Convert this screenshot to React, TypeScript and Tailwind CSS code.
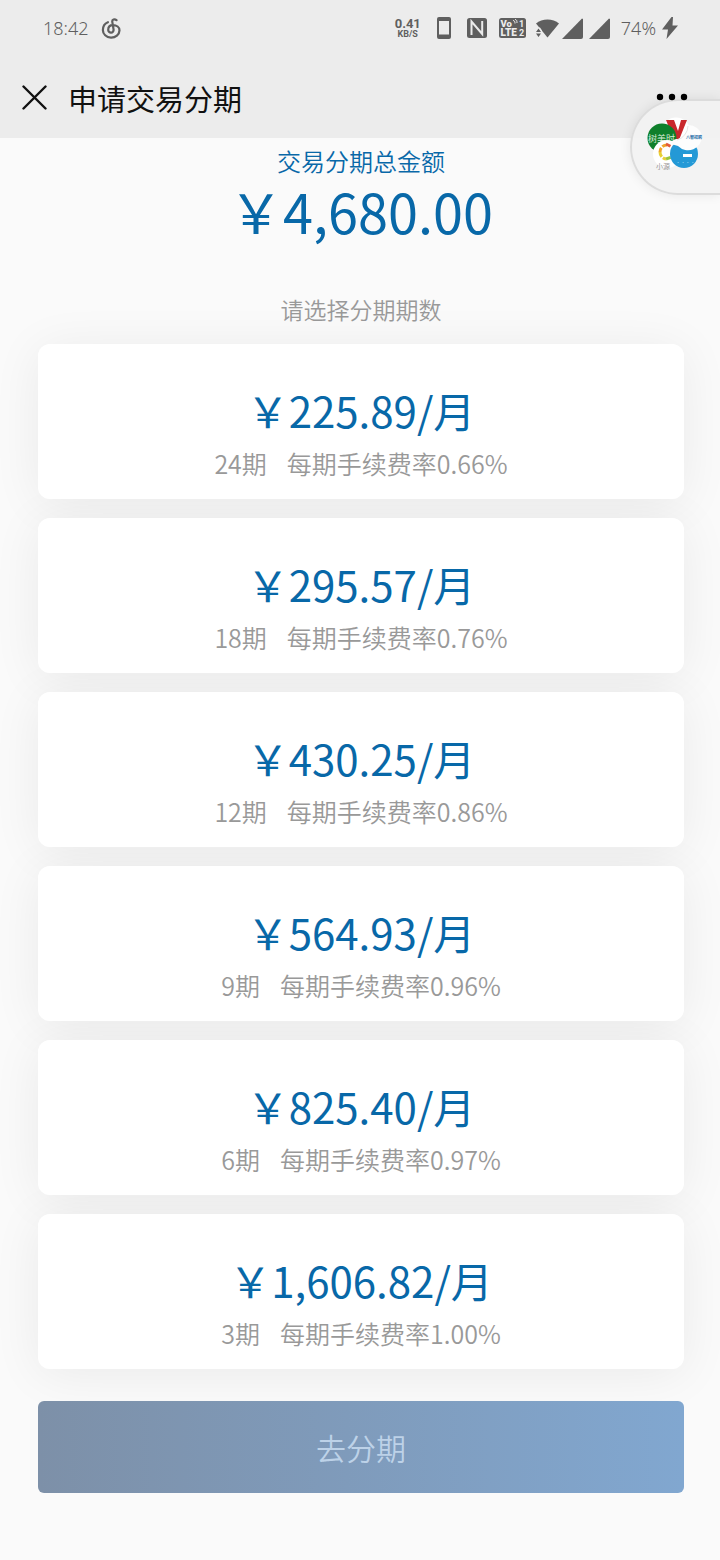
import { useState } from 'react';

const plans = [
  { periods: 24, amount: '225.89', rate: '0.66%' },
  { periods: 18, amount: '295.57', rate: '0.76%' },
  { periods: 12, amount: '430.25', rate: '0.86%' },
  { periods: 9, amount: '564.93', rate: '0.96%' },
  { periods: 6, amount: '825.40', rate: '0.97%' },
  { periods: 3, amount: '1,606.82', rate: '1.00%' },
];

function StatusBar() {
  return (
    <div className="flex h-14 items-center justify-between pl-[43px] pr-[42px] font-['Noto_Sans',sans-serif] text-[#5f5f5f]">
      <div className="flex items-center gap-3">
        <span className="text-lg font-light">18:42</span>
        <svg className="h-[21px] w-5" viewBox="0 0 20 21" fill="none" stroke="currentColor" strokeWidth="2.200" strokeLinecap="round">
          <path d="M15.500 2.200c-2-1.600-4.600-.700-4.200 1.700l1.300 7.800a2.700 2.700 0 1 1-5.400.300c0-2.900 1.700-4.800 4.600-4.800 4 0 6.700 2 6.700 5.200a8.300 7.400 0 0 1-16.600-.400c0-3.600 1.800-6.500 5-7.800" />
        </svg>
      </div>
      <div className="flex items-center">
        <div className="mr-4 flex flex-col items-center font-['Roboto',sans-serif] font-bold">
          <span className="text-[13px] leading-[13px]">0.41</span>
          <span className="text-[9px] leading-[9px]">KB/S</span>
        </div>
        <svg className="mr-4 h-[22px] w-[14px]" viewBox="0 0 14 22" fill="currentColor">
          <path fillRule="evenodd" d="M2 0h10a2 2 0 0 1 2 2v18a2 2 0 0 1-2 2H2a2 2 0 0 1-2-2V2a2 2 0 0 1 2-2zm0 4v13.500h10V4z" />
        </svg>
        <svg className="mr-3 size-5" viewBox="0 0 20 20" fill="none">
          <rect width="20" height="20" rx="2.500" fill="currentColor" />
          <path d="M4.500 17V3.500L15.200 16V3" stroke="#ececec" strokeWidth="2" />
        </svg>
        <svg className="mr-[10px] h-5 w-[27px]" viewBox="0 0 27 20">
          <rect width="27" height="20" rx="2.500" fill="currentColor" />
          <g fill="#ececec" fontFamily="Roboto, sans-serif" fontWeight="900">
            <text x="1.500" y="9" fontSize="9.500">Vo</text>
            <text x="1.500" y="18" fontSize="10">LTE</text>
            <text x="20" y="9" fontSize="9" fontWeight="700">1</text>
            <text x="20" y="18" fontSize="9" fontWeight="700">2</text>
          </g>
          <path d="M14 2.500c1.500 0 2 1 2 3M16 1.500c1.500 0 2 1 2 3.500" fill="none" stroke="#ececec" />
        </svg>
        <svg className="mr-[3px] h-[21px] w-[23px]" viewBox="0 0 23 21" fill="currentColor">
          <path d="M0 5.500C6 0 17 0 23 5.500L11.500 19.500z" />
          <path d="M0 9.500h4l2 3v6H0z" fill="#ececec" />
          <path d="m2.500 10.500 2.500 3.500H0zM0 15.500h5L2.500 19z" />
        </svg>
        <svg className="mr-[6px] size-[21px]" viewBox="0 0 21 21" fill="currentColor">
          <path d="M21 1v18a2 2 0 0 1-2 2H0L20 .500z" />
        </svg>
        <svg className="mr-[11px] size-[21px]" viewBox="0 0 21 21" fill="currentColor">
          <path d="M21 1v18a2 2 0 0 1-2 2H0L20 .500z" />
        </svg>
        <span className="mr-[6px] text-lg font-light">74%</span>
        <svg className="h-[22px] w-4" viewBox="0 0 16 22" fill="currentColor">
          <path d="M9.500 0 0 12.500h6L4.500 22 16 8.500h-5.500L11 0z" />
        </svg>
      </div>
    </div>
  );
}

function TitleBar() {
  return (
    <div className="flex h-[82px] items-center pl-[22px] pr-8">
      <button type="button" aria-label="关闭">
        <svg className="size-[25px]" viewBox="0 0 25 25" stroke="#111" strokeWidth="2.400" strokeLinecap="round">
          <path d="M1.500 1.500l22 22M23.500 1.500l-22 22" />
        </svg>
      </button>
      <h1 className="ml-[21px] flex-1 pt-1 text-[29px] text-[#111]">申请交易分期</h1>
      <button type="button" aria-label="更多" className="relative z-10">
        <svg className="h-2 w-8" viewBox="0 0 32 8" fill="#000">
          <circle cx="4" cy="4" r="3.200" />
          <circle cx="16" cy="4" r="3.200" />
          <circle cx="28" cy="4" r="3.200" />
        </svg>
      </button>
    </div>
  );
}

// floating window stack docked at the right edge
function FloatingBubble() {
  return (
    <button
      type="button"
      aria-label="浮窗"
      className="absolute right-0 top-[99px] flex h-24 w-[90px] items-center rounded-l-full border-2 border-r-0 border-[#dcdcdc] bg-[#f2f2f2]/95 pb-1 pl-[14px] shadow-[0_0_12px_rgba(0,0,0,0.08)]"
    >
      <svg className="size-[58px] shrink-0" viewBox="0 0 58 58" fontFamily="'Noto Sans CJK SC', sans-serif">
        <defs>
          <clipPath id="green-disc">
            <circle cx="16" cy="22" r="14.500" />
          </clipPath>
        </defs>
        <circle cx="30" cy="16" r="14.500" fill="#fff" />
        <path d="M20 4h8l4 11 3-11h6l-8 20h-5z" fill="#c9282d" />
        <circle cx="16" cy="22" r="14.500" fill="#0f7f2b" />
        <text x="2" y="26" fontSize="9" fill="#d8ecd8" clipPath="url(#green-disc)">树美时</text>
        <circle cx="21" cy="38" r="14" fill="#fff" />
        <g fill="none" strokeWidth="3" strokeDasharray="5 1.500">
          <path d="M21 29a7 7 0 0 0-7 7" stroke="#f0a52a" />
          <path d="M20 28l6 3" stroke="#e25a3c" />
          <path d="M14 36a7 7 0 0 0 6 7" stroke="#e8cf35" />
          <path d="M20 43l6-2" stroke="#9bc53d" />
        </g>
        <text x="10" y="53" fontSize="7" fill="#999">小源</text>
        <circle cx="38" cy="38" r="14" fill="#2499d6" />
        <path d="M37 38h9v3h-9z" fill="#fff" />
        <text x="30" y="49" fontSize="4" fill="#d5edfa">• • • •</text>
        <path d="M56 20a14 14 0 0 1-24 10l-7-2c0-3 3-5 7-5a14 14 0 0 0 10-14 14 14 0 0 1 14 11z" fill="#fdfdfd" />
        <path d="M42 10a15 15 0 0 1-11 14" fill="none" stroke="#ddd" strokeWidth=".800" />
        <text x="40" y="23" fontSize="4" fontWeight="700" fill="#1c6ba5">八智招聘</text>
      </svg>
    </button>
  );
}

export default function App() {
  const [selected, setSelected] = useState<number | null>(null);

  return (
    <div className="relative min-h-screen overflow-hidden bg-[#fafafa] font-['Noto_Sans_CJK_SC',sans-serif]">
      <header className="bg-[#ececec]">
        <StatusBar />
        <TitleBar />
      </header>
      <FloatingBubble />

      <main className="pb-16 pl-[38px] pr-9 text-center">
        <h2 className="text-2xl font-[350] leading-[46px] text-[#0868a8]">交易分期总金额</h2>
        <p className="text-[54px] leading-[54px] text-[#0868a8]">{'\uFFE5'}4,680.00</p>
        <p className="mb-[17px] mt-[53px] text-[23px] font-[350] leading-[36px] text-[#999]">请选择分期期数</p>

        <div className="isolate flex flex-col gap-[19px]">
          {plans.map((plan) => (
            <button
              key={plan.periods}
              type="button"
              aria-pressed={selected === plan.periods}
              onClick={() => setSelected(plan.periods)}
              className="relative rounded-xl bg-white pb-3 pt-[37px] before:absolute before:inset-0 before:-z-10 before:rounded-xl before:shadow-[0_5px_50px_rgba(0,0,0,0.065)]"
            >
              <span className="block text-[42px] leading-[58px] text-[#0868a8]">{'\uFFE5'}{plan.amount}/月</span>
              <span className="flex justify-center gap-5 text-[25px] font-[350] leading-[48px] text-[#999]">
                <span>{plan.periods}期</span>
                <span>每期手续费率{plan.rate}</span>
              </span>
            </button>
          ))}
        </div>

        <button
          type="button"
          className="relative mt-8 h-[92px] w-full rounded-md bg-linear-to-r from-[#7d90a8] to-[#81a7d0] text-3xl font-[350] text-[#bdd2e8]"
        >
          去分期
        </button>
      </main>
    </div>
  );
}
